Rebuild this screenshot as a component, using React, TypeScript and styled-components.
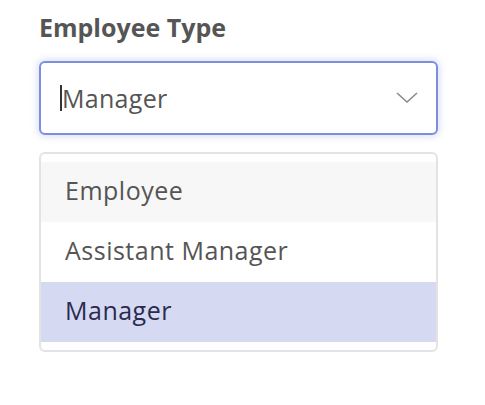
import React, { useState } from 'react';
import styled, { createGlobalStyle } from 'styled-components';

const GlobalStyle = createGlobalStyle`
  body {
    margin: 0;
    background: #fff;
    font-family: 'Open Sans', 'Liberation Sans', sans-serif;
  }
`;

const Wrapper = styled.div`
  padding: 12px 47px 0 39px;
  width: 399px;
`;

const Label = styled.div`
  font-size: 25px;
  font-weight: 700;
  color: #555;
  line-height: 30px;
  margin-bottom: 19px;
`;

const Control = styled.div`
  box-sizing: border-box;
  height: 74px;
  border: 2px solid #7b8ee0;
  border-radius: 6px;
  box-shadow: 0 0 6px 2px rgba(123, 142, 224, 0.25);
  display: flex;
  align-items: center;
  padding: 0 18px 0 19px;
  background: #fff;
`;

const Value = styled.div`
  flex: 1;
  font-size: 25px;
  letter-spacing: 0.3px;
  color: #555;
  line-height: 26px;
  border-left: 2px solid #333;
`;

const Menu = styled.ul`
  list-style: none;
  margin: 17px 0 0;
  padding: 8px 0;
  border: 2px solid #e3e3e3;
  border-radius: 6px;
`;

const Option = styled.li<{ $state: 'hover' | 'selected' | 'none' }>`
  box-sizing: border-box;
  height: 60px;
  display: flex;
  align-items: center;
  padding: 0 0 5px 24px;
  font-size: 25px;
  letter-spacing: 0.5px;
  color: ${(p) => (p.$state === 'selected' ? '#2b2a4f' : '#555')};
  background: ${(p) =>
    p.$state === 'selected' ? '#d5daf2' : p.$state === 'hover' ? '#f7f7f7' : '#fff'};
`;

const options = ['Employee', 'Assistant Manager', 'Manager'];

function Chevron() {
  return (
    <svg width="22" height="12" viewBox="0 0 22 12">
      <path d="M1 1 L11 10 L21 1" fill="none" stroke="#888" strokeWidth="1.5" />
    </svg>
  );
}

export default function App(): JSX.Element {
  const [value] = useState('Manager');

  return (
    <>
      <GlobalStyle />
      <Wrapper>
        <Label>Employee Type</Label>
        <Control>
          <Value>{value}</Value>
          <Chevron />
        </Control>
        <Menu>
          {options.map((opt, idx) => (
            <Option
              key={opt}
              $state={opt === value ? 'selected' : idx === 0 ? 'hover' : 'none'}
            >
              {opt}
            </Option>
          ))}
        </Menu>
      </Wrapper>
    </>
  );
}
